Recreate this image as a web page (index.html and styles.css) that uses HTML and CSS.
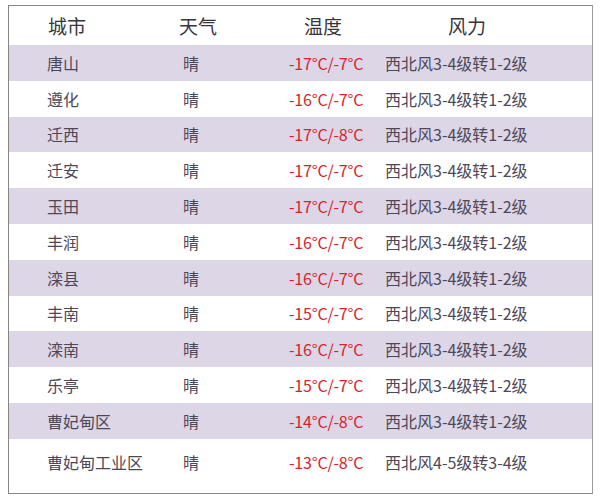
FILE: index.html
```html
<!DOCTYPE html>
<html lang="zh">
<head>
<meta charset="utf-8">
<link rel="stylesheet" href="styles.css">
</head>
<body>
<div class="table">
  <div class="row head">
    <div class="c1">城市</div><div class="c2">天气</div><div class="c3">温度</div><div class="c4">风力</div>
  </div>
  <div class="row odd"><div class="c1">唐山</div><div class="c2">晴</div><div class="c3 t">-17°C/-7°C</div><div class="c4">西北风3-4级转1-2级</div></div>
  <div class="row"><div class="c1">遵化</div><div class="c2">晴</div><div class="c3 t">-16°C/-7°C</div><div class="c4">西北风3-4级转1-2级</div></div>
  <div class="row odd"><div class="c1">迁西</div><div class="c2">晴</div><div class="c3 t">-17°C/-8°C</div><div class="c4">西北风3-4级转1-2级</div></div>
  <div class="row"><div class="c1">迁安</div><div class="c2">晴</div><div class="c3 t">-17°C/-7°C</div><div class="c4">西北风3-4级转1-2级</div></div>
  <div class="row odd"><div class="c1">玉田</div><div class="c2">晴</div><div class="c3 t">-17°C/-7°C</div><div class="c4">西北风3-4级转1-2级</div></div>
  <div class="row"><div class="c1">丰润</div><div class="c2">晴</div><div class="c3 t">-16°C/-7°C</div><div class="c4">西北风3-4级转1-2级</div></div>
  <div class="row odd"><div class="c1">滦县</div><div class="c2">晴</div><div class="c3 t">-16°C/-7°C</div><div class="c4">西北风3-4级转1-2级</div></div>
  <div class="row"><div class="c1">丰南</div><div class="c2">晴</div><div class="c3 t">-15°C/-7°C</div><div class="c4">西北风3-4级转1-2级</div></div>
  <div class="row odd"><div class="c1">滦南</div><div class="c2">晴</div><div class="c3 t">-16°C/-7°C</div><div class="c4">西北风3-4级转1-2级</div></div>
  <div class="row"><div class="c1">乐亭</div><div class="c2">晴</div><div class="c3 t">-15°C/-7°C</div><div class="c4">西北风3-4级转1-2级</div></div>
  <div class="row odd"><div class="c1">曹妃甸区</div><div class="c2">晴</div><div class="c3 t">-14°C/-8°C</div><div class="c4">西北风3-4级转1-2级</div></div>
  <div class="row last"><div class="c1">曹妃甸工业区</div><div class="c2">晴</div><div class="c3 t">-13°C/-8°C</div><div class="c4">西北风4-5级转3-4级</div></div>
</div>
</body>
</html>
```
FILE: styles.css
```css
html, body {
  margin: 0;
  padding: 0;
  background: #ffffff;
}
body {
  padding: 5px 0 0 8px;
  font-family: "Noto Sans CJK SC", "Noto Sans", sans-serif;
}
.table {
  width: 585px;
  box-sizing: border-box;
  border: 1px solid #858585;
  border-right-color: #9a9a9a;
}
.row {
  display: grid;
  grid-template-columns: 160px 100px 104px 1fr;
  align-items: center;
  height: 35.8px;
  font-size: 16px;
  color: #4d4858;
  line-height: 1;
}
.row.head {
  height: 39px;
  font-size: 19px;
  font-weight: 400;
  color: #38353d;
}
.row.odd {
  background: #ddd6e7;
}
.row.last {
  height: 54.2px;
  padding-bottom: 8px;
  box-sizing: border-box;
}
.c1 { padding-left: 38px; white-space: nowrap; }
.c2 { padding-left: 14px; }
.c3 { padding-left: 20px; white-space: nowrap; }
.c4 { padding-left: 12px; white-space: nowrap; }
.head .c1 { padding-left: 39px; }
.head .c2 { padding-left: 10px; }
.head .c3 { padding-left: 35px; }
.head .c4 { padding-left: 75px; }
.t {
  color: #d9222a;
  letter-spacing: -0.2px;
}
```
